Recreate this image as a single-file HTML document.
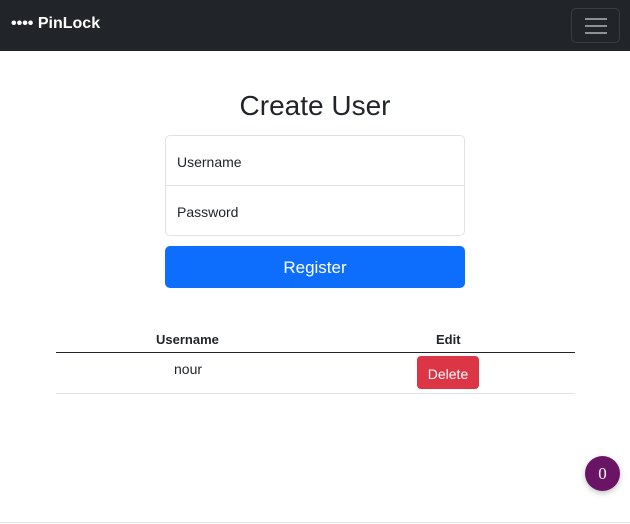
<!DOCTYPE html>
<html><head><meta charset="utf-8"><style>
*{box-sizing:border-box}
body{margin:0;width:630px;height:524px;background:#fff;font-family:"Liberation Sans",sans-serif;color:#212529;position:relative;overflow:hidden}
.nav{position:absolute;left:0;top:0;width:630px;height:51px;background:#212529}
.brand{position:absolute;left:11px;top:15px;color:#fff;font-weight:bold;font-size:16px}
.tog{position:absolute;left:571px;top:8px;width:49px;height:35px;border:1px solid #3a3e43;border-radius:5px}
.tog i{position:absolute;left:13px;width:22px;height:2px;background:#8d9094}
h1{position:absolute;top:90px;left:0;width:630px;text-align:center;margin:0;font-weight:normal;font-size:28px}
.form{position:absolute;left:165px;top:135px;width:300px;height:101px;border:1px solid #dee2e6;border-radius:5px}
.form div{height:50px;padding-left:11px;line-height:52px;font-size:14px}
.form div:first-child{border-bottom:1px solid #dee2e6}
.btn{position:absolute;left:165px;top:246px;width:300px;height:42px;background:#0d6efd;border-radius:5px;color:#fff;font-size:17px;text-align:center;line-height:44px}
.th{position:absolute;top:332px;font-weight:bold;font-size:13px}
.line{position:absolute;left:56px;width:519px}
.del{position:absolute;left:417px;top:356px;width:62px;height:33px;background:#dc3545;border-radius:4px;color:#fff;font-size:14px;text-align:center;line-height:36px}
.badge{position:absolute;left:585px;top:456px;width:35px;height:35px;border-radius:50%;background:#6a1466;color:#fff;text-align:center;line-height:35px;font-size:17px;font-family:"Liberation Serif",serif;box-shadow:0 2px 6px rgba(0,0,0,.25)}
</style></head><body>
<div class="nav"><div class="brand">•••• PinLock</div><div class="tog"><i style="top:9px"></i><i style="top:16px"></i><i style="top:23px"></i></div></div>
<h1>Create User</h1>
<div class="form"><div>Username</div><div>Password</div></div>
<div class="btn">Register</div>
<div class="th" style="left:156px">Username</div>
<div class="th" style="left:436px">Edit</div>
<div class="line" style="top:352px;border-top:1px solid #212529"></div>
<div style="position:absolute;left:174px;top:361px;font-size:14px">nour</div>
<div class="del">Delete</div>
<div class="line" style="top:393px;border-top:1px solid #dee2e6"></div>
<div class="badge">0</div>
<div style="position:absolute;left:0;top:522px;width:630px;border-top:1px solid #dee2e6"></div>
</body></html>
